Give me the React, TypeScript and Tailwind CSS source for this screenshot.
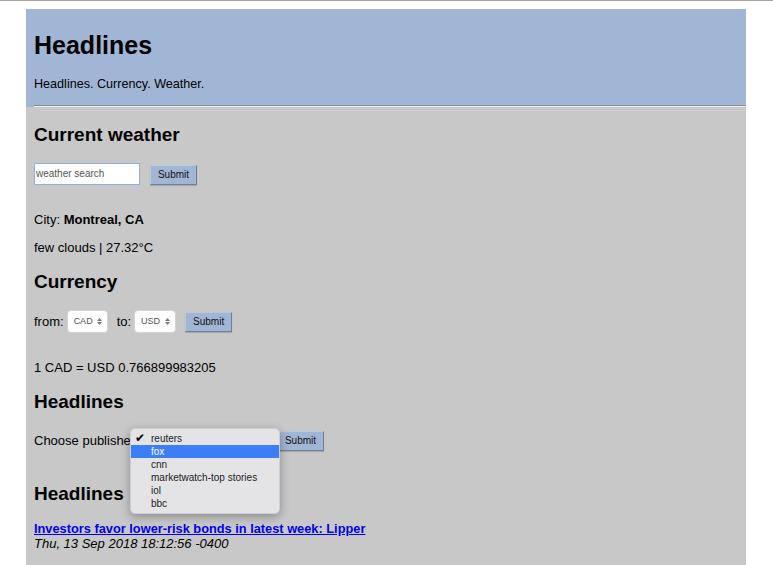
import React from "react";

function Submit({ className = "" }: { className?: string }) {
  return (
    <button
      className={
        "h-[20px] w-[47px] bg-[#a1b6d5] border border-t-[#b8c8e0] border-l-[#b8c8e0] border-b-[#6f7f99] border-r-[#6f7f99] text-[10px] leading-none text-[#111] flex items-center justify-center shadow-[0_1px_1px_rgba(0,0,0,0.15)] " +
        className
      }
    >
      Submit
    </button>
  );
}

function Select({ label, w }: { label: string; w: string }) {
  return (
    <div
      className={
        "h-[23px] bg-white rounded-[4px] border border-[#d4d4d4] flex items-center justify-between pl-[6px] pr-[5px] " +
        w
      }
    >
      <span className="text-[9px] text-[#555] leading-none">{label}</span>
      <span className="flex flex-col items-center gap-[1px]">
        <svg width="5" height="3" viewBox="0 0 5 3">
          <path d="M0 3 L2.5 0 L5 3 Z" fill="#777" />
        </svg>
        <svg width="5" height="3" viewBox="0 0 5 3">
          <path d="M0 0 L2.5 3 L5 0 Z" fill="#777" />
        </svg>
      </span>
    </div>
  );
}

export default function App() {
  const items = ["reuters", "fox", "cnn", "marketwatch-top stories", "iol", "bbc"];
  return (
    <div
      className="min-h-[565px] bg-white border-t border-[#a8a8a8] text-black"
      style={{ fontFamily: '"Liberation Sans", Arial, sans-serif' }}
    >
      <div className="ml-[26px] w-[720px] mt-[8px]">
        {/* Header */}
        <div className="bg-[#a1b6d5] h-[96px] pt-[21px] pl-[8px]">
          <h1 className="text-[25px] font-bold leading-[30px] h-[30px]">Headlines</h1>
          <p className="text-[12.6px] leading-[16px] mt-[16px]">Headlines. Currency. Weather.</p>
        </div>
        <div className="bg-[#a1b6d5]">
          <div className="ml-[8px] border-t border-t-[#8a8a8a] border-b border-b-[#f2f2f2]"></div>
        </div>
        {/* Body */}
        <div className="bg-[#c8c8c8] pl-[8px] pt-[16px] pb-[20px] min-h-[458px]">
          <h2 className="text-[19px] font-bold leading-[24px] h-[24px]">Current weather</h2>
          <div className="flex items-center mt-[16px] h-[22px]">
            <div className="w-[106px] h-[22px] bg-white border border-[#8fb0dc] flex items-center pl-[1px]">
              <span className="text-[10px] text-[#555] leading-none">weather search</span>
            </div>
            <Submit className="ml-[10px] mt-[2px]" />
          </div>
          <p className="text-[13px] leading-[16px] mt-[27px]">
            City: <b>Montreal, CA</b>
          </p>
          <p className="text-[13px] leading-[16px] mt-[12px]">few clouds | 27.32°C</p>
          <h2 className="text-[19px] font-bold leading-[24px] h-[24px] mt-[14px]">Currency</h2>
          <div className="flex items-center mt-[16px] h-[23px] text-[13px]">
            <span>from:</span>
            <div className="ml-[3px]">
              <Select label="CAD" w="w-[41px]" />
            </div>
            <span className="ml-[9px]">to:</span>
            <div className="ml-[3px]">
              <Select label="USD" w="w-[42px]" />
            </div>
            <Submit className="ml-[9px] mt-[1px]" />
          </div>
          <p className="text-[13px] leading-[16px] mt-[27px]">1 CAD = USD 0.766899983205</p>
          <h2 className="text-[19px] font-bold leading-[24px] h-[24px] mt-[14px]">Headlines</h2>
          <div className="relative flex items-center mt-[17px] h-[20px] text-[13px]">
            <span>Choose publisher:</span>
            <div className="ml-[4px]">
              <Select label="" w="w-[120px]" />
            </div>
            <Submit className="absolute left-[243px] top-0" />
            <div className="absolute left-[96px] top-[-3px] w-[150px] h-[86px] rounded-[5px] bg-[#e4e4e7] shadow-[0_3px_10px_rgba(0,0,0,0.3)] border border-[#cfcfd3] pt-[3px]">
              {items.map((it, i) => (
                <div
                  key={it}
                  className={
                    "relative h-[13px] flex items-center pl-[20px] text-[10px] leading-none " +
                    (i === 1 ? "bg-[#3d7ef6] text-white" : "text-[#222]")
                  }
                >
                  {i === 0 && (
                    <span
                      className="absolute left-[4px] top-[0px] text-[12px] leading-[13px] text-black"
                      style={{ fontFamily: '"DejaVu Sans", sans-serif' }}
                    >
                      ✔
                    </span>
                  )}
                  {it}
                </div>
              ))}
            </div>
          </div>
          <h2 className="text-[19px] font-bold leading-[24px] h-[24px] mt-[31px]">Headlines</h2>
          <div className="mt-[15px]">
            <a href="#" className="text-[12.8px] leading-[15px] font-bold text-[#0000ee] underline block">
              Investors favor lower-risk bonds in latest week: Lipper
            </a>
            <p className="text-[13px] leading-[16px] italic">Thu, 13 Sep 2018 18:12:56 -0400</p>
          </div>
        </div>
      </div>
    </div>
  );
}
